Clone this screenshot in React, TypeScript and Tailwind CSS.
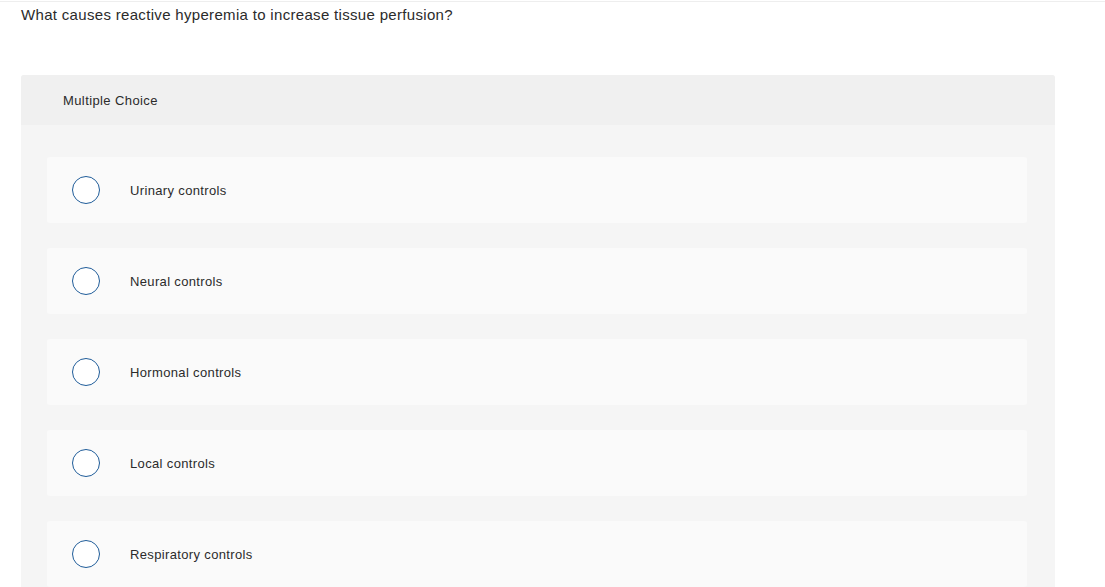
import React from 'react';

const options = [
    'Urinary controls',
    'Neural controls',
    'Hormonal controls',
    'Local controls',
    'Respiratory controls',
];

export default function App() {
    return (
        <div className="min-h-[587px] bg-white text-[#2b2b2b] tracking-[0.35px] font-['Liberation_Sans',Arial,sans-serif]">
            <div className="h-[2px] border-b border-[#eeeeee]" />
            <div className="px-[21px] pt-[3px]">
                <p className="text-[15px] leading-[20px] tracking-[0.32px]">
                    What causes reactive hyperemia to increase tissue perfusion?
                </p>
                <div className="mt-[50px] w-[1034px] rounded-t-[3px] bg-[#f5f5f5]">
                    <div className="flex h-[50px] items-center rounded-t-[3px] bg-[#f0f0f0] px-[42px] pt-[1px] text-[13px] tracking-[0.4px]">
                        Multiple Choice
                    </div>
                    <div className="flex flex-col gap-[25px] px-[26px] pt-[32px] pb-[20px]">
                        {options.map((opt) => (
                            <div key={opt} className="flex h-[66px] w-[980px] items-center rounded-[3px] bg-[#fafafa] pl-[25px]">
                                <span className="h-[28px] w-[28px] shrink-0 rounded-full border-[1.5px] border-[#1f5c99] bg-white" />
                                <span className="ml-[30px] pt-[2px] text-[13px]">{opt}</span>
                            </div>
                        ))}
                    </div>
                </div>
            </div>
        </div>
    );
}
